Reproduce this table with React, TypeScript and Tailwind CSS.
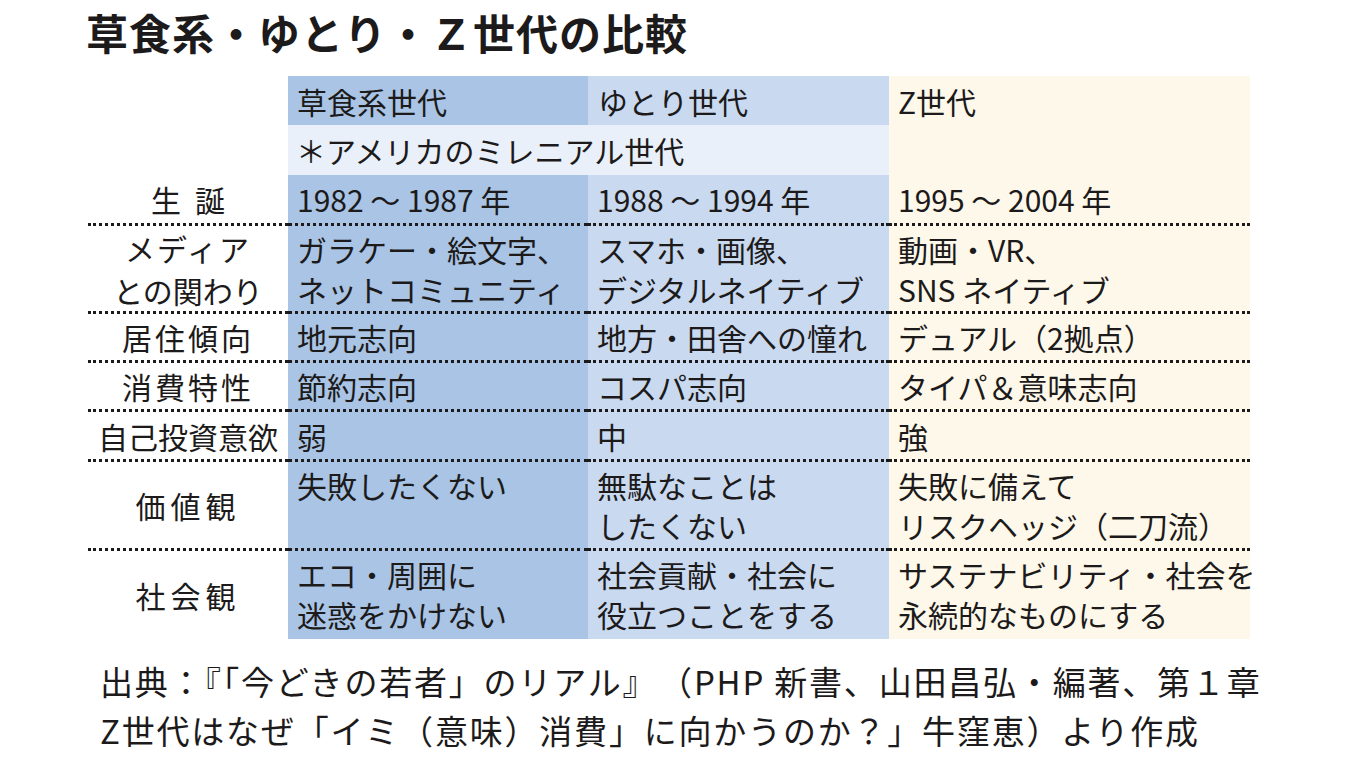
import React from 'react';

const font = { fontFamily: '"Noto Sans CJK JP", "Noto Sans", sans-serif' };

type Row = {
  label: React.ReactNode;
  cells: React.ReactNode[];
  h: string;
  multi?: boolean;
  line?: boolean;
};

const rows: Row[] = [
  {
    label: <span className="tracking-[14px] pl-[14px]">生誕</span>,
    cells: ['1982 〜 1987 年', '1988 〜 1994 年', '1995 〜 2004 年'],
    h: 'h-[51px]',
    line: true,
  },
  {
    label: (
      <span className="leading-[42px] text-center">
        <span className="tracking-[2px]">メディア</span>
        <br />
        との関わり
      </span>
    ),
    cells: [
      <>ガラケー・絵文字、<br />ネットコミュニティ</>,
      <>スマホ・画像、<br />デジタルネイティブ</>,
      <>動画・VR、<br />SNS ネイティブ</>,
    ],
    h: 'h-[88px]',
    multi: true,
    line: true,
  },
  {
    label: <span className="tracking-[3px]">居住傾向</span>,
    cells: ['地元志向', '地方・田舎への憧れ', 'デュアル（2拠点）'],
    h: 'h-[49px]',
    line: true,
  },
  {
    label: <span className="tracking-[3px]">消費特性</span>,
    cells: ['節約志向', 'コスパ志向', 'タイパ＆意味志向'],
    h: 'h-[49px]',
    line: true,
  },
  {
    label: <span>自己投資意欲</span>,
    cells: ['弱', '中', '強'],
    h: 'h-[50px]',
    line: true,
  },
  {
    label: <span className="tracking-[5px]">価値観</span>,
    cells: [
      '失敗したくない',
      <>無駄なことは<br />したくない</>,
      <>失敗に備えて<br />リスクヘッジ（二刀流）</>,
    ],
    h: 'h-[89px]',
    multi: true,
    line: true,
  },
  {
    label: <span className="tracking-[5px]">社会観</span>,
    cells: [
      <>エコ・周囲に<br />迷惑をかけない</>,
      <>社会貢献・社会に<br />役立つことをする</>,
      <>サステナビリティ・社会を<br />永続的なものにする</>,
    ],
    h: 'h-[88px]',
    multi: true,
  },
];

const colBg = ['bg-[#a9c4e4]', 'bg-[#c9d9ef]', 'bg-[#fdf8ea]'];
const grid = 'grid grid-cols-[200px_300px_301px_361px]';

export default function App() {
  return (
    <div className="w-[1350px] h-[759px] bg-white text-[#1c1a1a] overflow-hidden" style={font}>
      <h1 className="pl-[86px] pt-[8px] h-[76px] text-[42px] font-bold leading-[48px] tracking-[1px]">
        草食系・ゆとり・Ｚ世代の比較
      </h1>

      <div className="ml-[88px] w-[1162px] text-[30px]">
        <div className={`${grid} h-[49px] leading-[40px]`}>
          <div />
          <div className={`${colBg[0]} flex items-center pl-[9px]`}>草食系世代</div>
          <div className={`${colBg[1]} flex items-center pl-[10px]`}>ゆとり世代</div>
          <div className={`${colBg[2]} flex items-center pl-[9px]`}>Z世代</div>
        </div>
        <div className={`${grid} h-[50px] leading-[40px]`}>
          <div />
          <div className="col-span-2 bg-[#e9f0f9] flex items-center pl-[8px]">＊アメリカのミレニアル世代</div>
          <div className={colBg[2]} />
        </div>

        {rows.map((r, i) => {
          const border = r.line ? 'border-b-[3px] border-dotted border-[#1c1a1a]' : '';
          return (
            <div key={i} className={`${grid} ${r.h}`}>
              <div className={`${border} flex items-center justify-center leading-[40px]`}>{r.label}</div>
              {r.cells.map((c, j) => (
                <div
                  key={j}
                  className={`${colBg[j]} ${border} pl-[9px] leading-[40px] whitespace-nowrap ${
                    r.multi ? 'pt-[3px]' : 'flex items-center'
                  }`}
                >
                  {c}
                </div>
              ))}
            </div>
          );
        })}
      </div>

      <div className="pl-[100px] pt-[18px] text-[33px] leading-[49px] tracking-[1.8px] whitespace-nowrap">
        <div>出典：『「今どきの若者」のリアル』　（PHP 新書、山田昌弘・編著、第１章</div>
        <div>Z世代はなぜ「イミ（意味）消費」に向かうのか？」牛窪恵）より作成</div>
      </div>
    </div>
  );
}
